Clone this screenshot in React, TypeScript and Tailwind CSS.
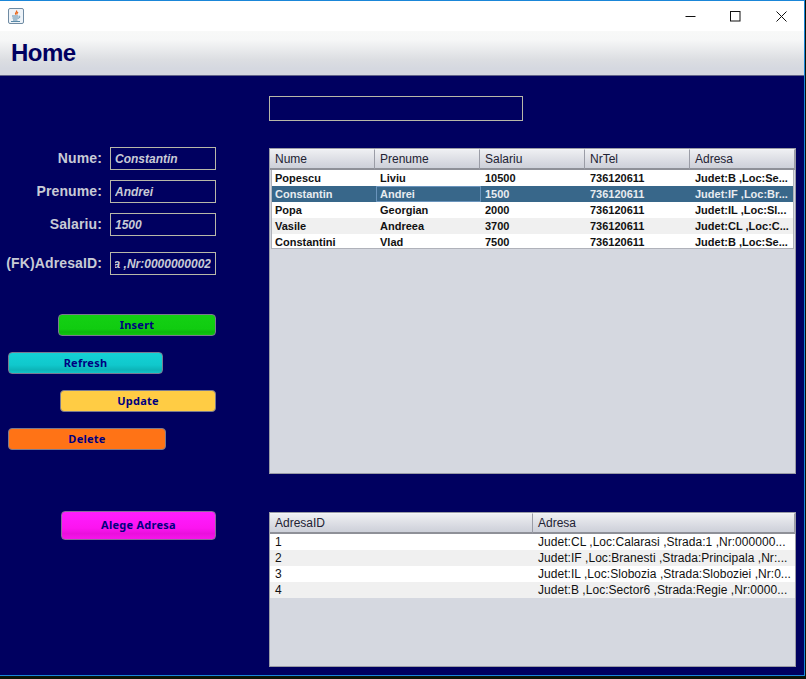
const sans = "font-['Liberation_Sans',Arial,sans-serif]";

const fields = [
  { label: "Nume:", value: "Constantin", mt: "mt-[71px]", end: false },
  { label: "Prenume:", value: "Andrei", mt: "mt-[10px]", end: false },
  { label: "Salariu:", value: "1500", mt: "mt-[10px]", end: false },
  { label: "(FK)AdresaID:", value: "a ,Nr:0000000002", mt: "mt-[16px]", end: true },
];

const buttons = [
  { label: "Insert", box: "ml-[58px] w-[158px] mt-[39px]", color: "bg-[linear-gradient(#14d014,#10cc10_70%,#0cb80c_85%,#10c810)]" },
  { label: "Refresh", box: "ml-[8px] w-[155px] mt-[16px]", color: "bg-[linear-gradient(#14d2d6,#10c8cc_60%,#0cb4b8_85%,#10c4c8)]" },
  { label: "Update", box: "ml-[60px] w-[156px] mt-[16px]", color: "bg-[#ffcc44]" },
  { label: "Delete", box: "ml-[8px] w-[158px] mt-[16px]", color: "bg-[#ff7316]" },
];

const mainRows = [
  ["Popescu", "Liviu", "10500", "736120611", "Judet:B ,Loc:Se..."],
  ["Constantin", "Andrei", "1500", "736120611", "Judet:IF ,Loc:Br..."],
  ["Popa", "Georgian", "2000", "736120611", "Judet:IL ,Loc:Sl..."],
  ["Vasile", "Andreea", "3700", "736120611", "Judet:CL ,Loc:C..."],
  ["Constantini", "Vlad", "7500", "736120611", "Judet:B ,Loc:Se..."],
];

const addressRows = [
  ["1", "Judet:CL ,Loc:Calarasi ,Strada:1 ,Nr:000000..."],
  ["2", "Judet:IF ,Loc:Branesti ,Strada:Principala ,Nr:..."],
  ["3", "Judet:IL ,Loc:Slobozia ,Strada:Sloboziei ,Nr:0..."],
  ["4", "Judet:B ,Loc:Sector6 ,Strada:Regie ,Nr:0000..."],
];

function HeaderCell({ text, w }: { text: string; w: string }) {
  return (
    <div className={`${w} h-full pl-[5px] flex items-center text-[12px] text-[#222233] bg-[linear-gradient(#eeeff2,#d5d7df_75%,#cdd0d9)] border-r border-r-[#9a9ca6] border-b-2 border-b-[#8e9098] border-t border-t-[#f4f5f7]`}>
      {text}
    </div>
  );
}

function JavaIcon() {
  return (
    <svg width="16" height="16" viewBox="0 0 16 16" className="ml-[8px]">
      <rect x="0.5" y="0.5" width="15" height="15" rx="1.5" fill="#eef3f8" stroke="#6f8ba3" />
      <path d="M8.5 2.5c1 1.5-2 2.4-.8 4.2M10 4c-1 1-1.6 1.6-.9 2.6" fill="none" stroke="#e8651a" strokeWidth="1.2" />
      <path d="M4 8h6M4.5 10h5.5M5 12h4.5M3 13.5h9" stroke="#5a8aa8" strokeWidth="1" fill="none" />
      <path d="M10.5 8.2c2 -.5 2 1.8 -.5 2" stroke="#5a8aa8" strokeWidth="1" fill="none" />
    </svg>
  );
}

export default function App() {
  return (
    <div className={`w-[806px] h-[679px] bg-[#0c1408] overflow-hidden ${sans}`}>
      <div className="w-[805px] h-[676px] border-t border-r border-b border-[#1a86d8] flex flex-col bg-[#000060]">
        <div className="h-[30px] shrink-0 bg-white flex items-center justify-between">
          <JavaIcon />
          <div className="flex items-center mr-[17px]">
            <svg width="11" height="11" viewBox="0 0 11 11"><path d="M0.5 5.5h10" stroke="#111" strokeWidth="1" /></svg>
            <svg width="11" height="11" viewBox="0 0 11 11" className="ml-[34px]"><rect x="0.5" y="0.5" width="9.5" height="9.5" fill="none" stroke="#111" /></svg>
            <svg width="11" height="11" viewBox="0 0 11 11" className="ml-[35px]"><path d="M0.5 0.5l10 10M10.5 0.5l-10 10" stroke="#111" strokeWidth="1" /></svg>
          </div>
        </div>
        <div className="h-[45px] shrink-0 bg-[linear-gradient(#f8f9f8,#f6f7f7_20%,#dcdee2_65%,#d5d8e0_85%)] border-b border-b-[#62648a] flex items-center pl-[11px]">
          <span className="text-[24px] font-bold text-[#000060] leading-none -mt-[1px] tracking-[-0.5px]">Home</span>
        </div>
        <div className="flex flex-1 min-h-0">
          <div className="w-[269px] shrink-0 flex flex-col">
            {fields.map((f) => (
              <div key={f.label} className={`${f.mt} flex h-[23px] shrink-0 items-center`}>
                <div className="w-[102px] text-right text-[14px] font-bold tracking-[0.12px] text-[#c8cbd6] whitespace-nowrap -mt-[1px]">{f.label}</div>
                <div className="ml-[8px] w-[106px] h-[23px] border border-[#b8b8a8] flex items-center px-[4px] text-[12px] font-bold italic text-[#c8cbd6]">
                  <div className={`w-full flex overflow-hidden whitespace-nowrap ${f.end ? "justify-end" : "justify-start"}`}>
                    <span className="shrink-0">{f.value}</span>
                  </div>
                </div>
              </div>
            ))}
            {buttons.map((b) => (
              <div key={b.label} className={`${b.box} ${b.color} h-[22px] shrink-0 rounded-[4px] border border-[#7a7a90] flex items-center justify-center text-[11px] font-bold tracking-[0.25px] text-[#000080] font-['Noto_Sans',sans-serif]`}>
                {b.label}
              </div>
            ))}
            <div className="ml-[61px] w-[155px] mt-[61px] h-[29px] shrink-0 rounded-[4px] border border-[#8a6a9a] bg-[linear-gradient(#ff1eff,#fc14f0_60%,#ea10dc_80%,#f814ec)] flex items-center justify-center text-[11px] font-bold tracking-[0.25px] text-[#000080] font-['Noto_Sans',sans-serif]">
              Alege Adresa
            </div>
          </div>
          <div className="flex flex-col w-[527px]">
            <div className="mt-[20px] w-[254px] h-[25px] shrink-0 border border-[#b8b8a8]" />
            <div className="mt-[27px] h-[326px] shrink-0 border border-[#9a9ca6] bg-[#d5d8e0] flex flex-col">
              <div className="flex h-[21px] shrink-0">
                <HeaderCell text="Nume" w="w-[105px]" />
                <HeaderCell text="Prenume" w="w-[105px]" />
                <HeaderCell text="Salariu" w="w-[105px]" />
                <HeaderCell text="NrTel" w="w-[105px]" />
                <HeaderCell text="Adresa" w="flex-1" />
              </div>
              <div className="mx-[1px] h-[79px] shrink-0 overflow-hidden border-x border-b border-[#b0b2ba] bg-white">
                {mainRows.map((r, i) => (
                  <div key={r[0]} className={`flex h-[16px] text-[11px] font-bold ${i === 1 ? "bg-[#38678a] text-[#e8ecf0]" : i === 3 ? "bg-[#f0f0f0] text-[#111]" : "bg-white text-[#111]"}`}>
                    {r.map((c, j) => (
                      <div key={j} className={`${j === 4 ? "flex-1" : j === 0 ? "w-[104px]" : "w-[105px]"} ${j === 0 ? "pl-[3px]" : "pl-[4px]"} ${i === 1 && j === 1 ? "border border-[#6a94bc] !pl-[3px] leading-[14px]" : "leading-[16px]"} whitespace-nowrap overflow-hidden`}>
                        {c}
                      </div>
                    ))}
                  </div>
                ))}
              </div>
            </div>
            <div className="mt-[38px] h-[155px] shrink-0 border border-[#9a9ca6] bg-[#d5d8e0] flex flex-col">
              <div className="flex h-[21px] shrink-0">
                <HeaderCell text="AdresaID" w="w-[263px]" />
                <HeaderCell text="Adresa" w="flex-1" />
              </div>
              <div>
                {addressRows.map((r, i) => (
                  <div key={r[0]} className={`flex h-[16px] text-[12px] leading-[16px] tracking-[0.04px] text-[#111] ${i % 2 ? "bg-[#f0f0f0]" : "bg-white"}`}>
                    <div className="w-[263px] pl-[5px]">{r[0]}</div>
                    <div className="flex-1 pl-[5px] whitespace-nowrap overflow-hidden">{r[1]}</div>
                  </div>
                ))}
              </div>
            </div>
          </div>
        </div>
      </div>
    </div>
  );
}
